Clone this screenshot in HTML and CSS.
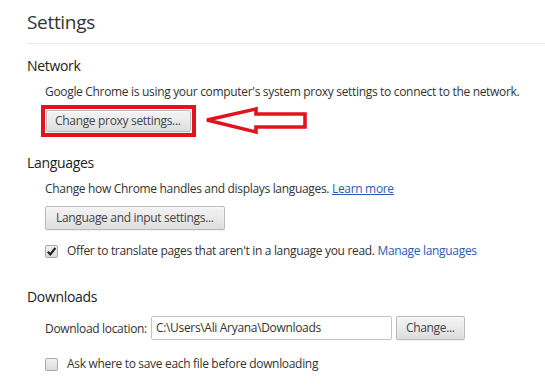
FILE: index.html
```html
<!doctype html>
<html lang="en">
<head>
    <meta charset="utf-8">
    <title>Settings</title>
    <link rel="stylesheet" href="styles.css">
</head>
<body>
    <div class="page">
        <header class="page-header">
            <h1>Settings</h1>
        </header>

        <section class="section network">
            <h2>Network</h2>
            <div class="section-body">
                <p class="line">Google Chrome is using your computer's system proxy settings to connect to the network.</p>
                <div class="callout">
                    <div class="highlight">
                        <button class="btn">Change proxy settings...</button>
                    </div>
                    <svg class="arrow" width="104" height="32" viewBox="0 0 104 32">
                        <polygon points="3,15 52,4 52,9 101,9 101,22 52,22 52,27" fill="#fff" stroke="#e3131d" stroke-width="3.6" stroke-linejoin="miter"/>
                    </svg>
                </div>
            </div>
        </section>

        <section class="section languages">
            <h2>Languages</h2>
            <div class="section-body">
                <p class="line">Change how Chrome handles and displays languages. <a class="link underline" href="#">Learn more</a></p>
                <button class="btn lang-btn">Language and input settings...</button>
                <label class="check-row offer">
                    <span class="check checked">
                        <svg width="11" height="11" viewBox="0 0 11 11"><path d="M1.8 5.8 L4.3 8.4 L9.4 1.9" fill="none" stroke="#222" stroke-width="2.2"/></svg>
                    </span>
                    <span>Offer to translate pages that aren't in a language you read. <a class="link" href="#">Manage languages</a></span>
                </label>
            </div>
        </section>

        <section class="section downloads">
            <h2>Downloads</h2>
            <div class="section-body">
                <div class="location-row">
                    <span>Download location:</span>
                    <span class="path-field">C:\Users\Ali Aryana\Downloads</span>
                    <button class="btn small-btn">Change...</button>
                </div>
                <label class="check-row ask">
                    <span class="check"></span>
                    <span>Ask where to save each file before downloading</span>
                </label>
            </div>
        </section>
    </div>
</body>
</html>
```

FILE: styles.css
```css
body {
    margin: 0;
    background: #fff;
    font-family: "Open Sans", "Noto Sans", sans-serif;
    font-size: 12px;
    letter-spacing: -0.32px;
    color: #333;
}
.page { padding-left: 27px; }

.page-header {
    height: 44px;
    border-bottom: 1px solid #eaeaea;
    box-sizing: border-box;
    padding-top: 10px;
}
.page-header h1 {
    margin: 0;
    font-size: 19px;
    font-weight: normal;
    line-height: 24px;
    color: #333;
}

.section h2 {
    margin: 0;
    font-size: 14px;
    font-weight: normal;
    line-height: 18px;
    color: #222;
}
.section-body {
    padding-left: 18px;
    padding-top: 9px;
}
.network { padding-top: 13px; }
.languages { padding-top: 17px; }
.downloads { padding-top: 29px; }

.line {
    margin: 0;
    line-height: 16px;
    white-space: nowrap;
}
.link { color: #2a5bb0; text-decoration: none; }
.link.underline { text-decoration: underline; }

.btn {
    font-family: inherit;
    font-size: 12px;
    letter-spacing: inherit;
    color: #444;
    height: 24px;
    padding: 0 10px;
    background: linear-gradient(#f2f2f2, #ededed 38%, #dcdcdc);
    border: 1px solid #b9b9b9;
    border-radius: 2px;
    box-shadow: 0 1px 0 rgba(0,0,0,0.06), inset 0 1px 2px rgba(255,255,255,0.75);
    line-height: 22px;
    white-space: nowrap;
}

.callout {
    display: flex;
    align-items: center;
    margin-top: 5px;
}
.highlight {
    margin-left: -4px;
    border: 4px solid #e3131d;
    padding: 1px;
}
.highlight .btn { height: 22px; line-height: 20px; display: block; padding: 0 9px 0 8px; }
.arrow { margin-left: 8px; display: block; }

.lang-btn { margin-top: 9px; display: block; }

.check-row {
    display: flex;
    align-items: center;
    line-height: 16px;
    white-space: nowrap;
}
.offer { margin-top: 13px; }
.ask { margin-top: 16px; }
.check {
    width: 13px;
    height: 13px;
    box-sizing: border-box;
    border: 1px solid #a9a9a9;
    border-radius: 2px;
    background: linear-gradient(#f2f2f2, #dcdcdc);
    margin-right: 9px;
    display: flex;
    align-items: center;
    justify-content: center;
}
.check svg { display: block; }

.location-row {
    display: flex;
    align-items: center;
    gap: 4px;
    margin-top: 1px;
    white-space: nowrap;
}
.path-field {
    width: 241px;
    height: 24px;
    box-sizing: border-box;
    border: 1px solid #c4c4c4;
    border-radius: 2px;
    padding: 0 4px;
    line-height: 22px;
    color: #333;
}
.small-btn { padding: 0 9px; }
```
